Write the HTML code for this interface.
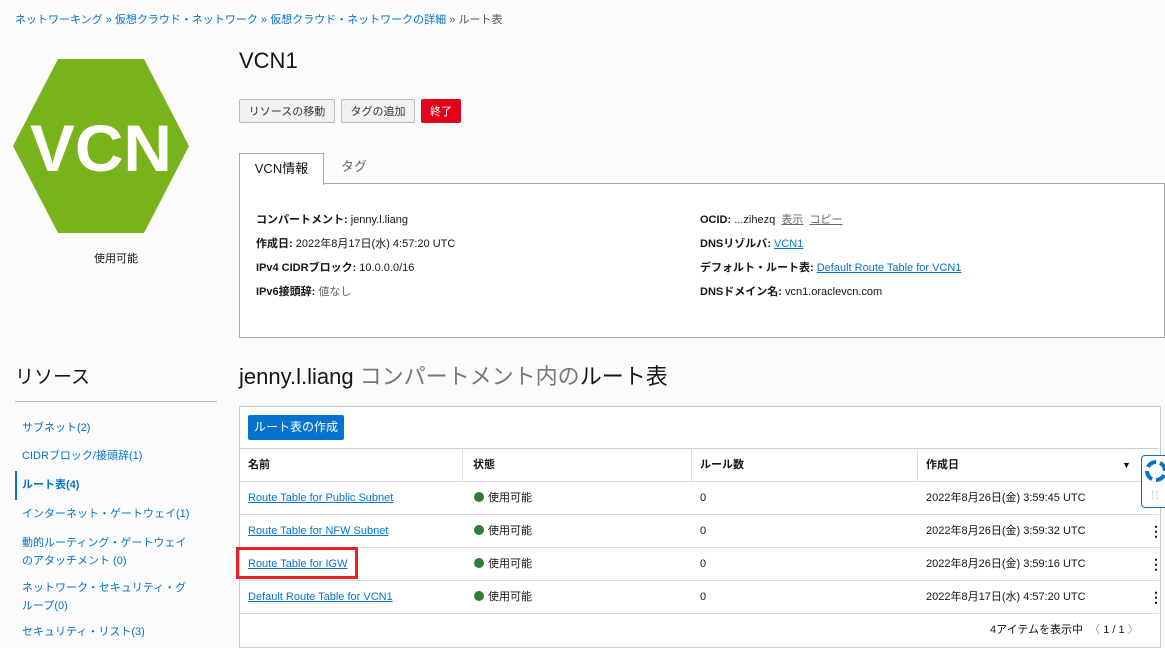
<!DOCTYPE html>
<html><head><meta charset="utf-8"><style>
body{margin:0;width:1165px;height:637px;overflow:hidden;background:#fbfbfb;font-family:"Liberation Sans","Noto Sans CJK JP",sans-serif;color:#161513;position:relative;font-size:12px}
.a{position:absolute;white-space:nowrap;line-height:14px}
a{color:#0572ce}
.bc{left:15px;top:13px;font-size:11px;color:#0572ce}
.bc span{color:#555}
.btn{position:absolute;top:99px;height:24px;border:1px solid #bbb;background:#f1f1f1;font-size:11px;line-height:24px;text-align:center;color:#333;box-sizing:border-box;border-radius:2px}
.lab{font-weight:bold}
.res a{text-decoration:none;color:#0572ce;font-size:11px}
.col{position:absolute;top:448px;height:33px;border-right:1px solid #ddd;box-sizing:border-box}
.row{position:absolute;left:240px;width:919px;height:33px;border-top:1px solid #ddd}
.dot{display:inline-block;width:10px;height:10px;border-radius:50%;background:#2e7d32;vertical-align:-1px;margin-right:4px}
.km{position:absolute;left:1149px;font-weight:bold;font-size:14px}
</style></head><body>
<div class="a bc">ネットワーキング » 仮想クラウド・ネットワーク » 仮想クラウド・ネットワークの詳細 <span>» ルート表</span></div>
<svg class="a" style="left:13px;top:59px" width="177" height="174"><polygon points="45,0 131,0 176,87 131,174 45,174 0,87" fill="#78b31c"/><text x="88" y="112" text-anchor="middle" font-family="Liberation Sans" font-weight="bold" font-size="66" fill="#fff" textLength="142" lengthAdjust="spacingAndGlyphs">VCN</text></svg>
<div class="a" style="left:94px;top:252px;font-size:11px">使用可能</div>
<div class="a" style="left:239px;top:49px;font-size:22px;line-height:24px">VCN1</div>
<div class="btn" style="left:239px;width:96px">リソースの移動</div>
<div class="btn" style="left:341px;width:74px">タグの追加</div>
<div class="btn" style="left:421px;width:40px;background:#e2001a;border-color:#e2001a;color:#fff">終了</div>
<div class="a" style="left:239px;top:183px;width:926px;height:155px;border:1px solid #aaa;box-sizing:border-box;background:#fff"></div>
<div class="a" style="left:239px;top:153px;width:85px;height:32px;border:1px solid #aaa;border-bottom:none;background:#fff;box-sizing:border-box;text-align:center;line-height:30px;font-size:13px">VCN情報</div>
<div class="a" style="left:341px;top:160px;font-size:13px;color:#666">タグ</div>
<div class="a" style="left:256px;top:213px;font-size:11px"><span class="lab">コンパートメント:</span> jenny.l.liang</div>
<div class="a" style="left:256px;top:237px;font-size:11px"><span class="lab">作成日:</span> 2022年8月17日(水) 4:57:20 UTC</div>
<div class="a" style="left:256px;top:261px;font-size:11px"><span class="lab">IPv4 CIDRブロック:</span> 10.0.0.0/16</div>
<div class="a" style="left:256px;top:285px;font-size:11px"><span class="lab">IPv6接頭辞:</span> <span style="color:#666">値なし</span></div>
<div class="a" style="left:700px;top:213px;font-size:11px"><span class="lab">OCID:</span> ...zihezq &nbsp;<u style="color:#666">表示</u> &nbsp;<u style="color:#666">コピー</u></div>
<div class="a" style="left:700px;top:237px;font-size:11px"><span class="lab">DNSリゾルバ:</span> <a href="#">VCN1</a></div>
<div class="a" style="left:700px;top:261px;font-size:11px"><span class="lab">デフォルト・ルート表:</span> <a href="#">Default Route Table for VCN1</a></div>
<div class="a" style="left:700px;top:285px;font-size:11px"><span class="lab">DNSドメイン名:</span> vcn1.oraclevcn.com</div>
<div class="a" style="left:15px;top:367px;font-size:19px;line-height:22px">リソース</div>
<div class="a" style="left:15px;top:401px;width:202px;border-top:1px solid #bbb"></div>
<div class="res">
<div class="a" style="left:22px;top:420px"><a href="#">サブネット(2)</a></div>
<div class="a" style="left:22px;top:448px"><a href="#">CIDRブロック/接頭辞(1)</a></div>
<div class="a" style="left:15px;top:471px;height:29px;border-left:2px solid #0572ce"></div>
<div class="a" style="left:22px;top:477px"><a href="#" style="font-weight:bold">ルート表(4)</a></div>
<div class="a" style="left:22px;top:506px"><a href="#">インターネット・ゲートウェイ(1)</a></div>
<div class="a" style="left:22px;top:534px;line-height:17px"><a href="#">動的ルーティング・ゲートウェイ<br>のアタッチメント (0)</a></div>
<div class="a" style="left:22px;top:579px;line-height:17px"><a href="#">ネットワーク・セキュリティ・グ<br>ループ(0)</a></div>
<div class="a" style="left:22px;top:624px"><a href="#">セキュリティ・リスト(3)</a></div>
</div>
<div class="a" style="left:239px;top:364px;font-size:22px;line-height:26px">jenny.l.liang <span style="color:#777">コンパートメント内の</span>ルート表</div>
<div class="a" style="left:239px;top:406px;width:920px;height:240px;border:1px solid #ccc;background:#fff"></div>
<div class="a" style="left:248px;top:415px;width:96px;height:25px;background:#0572ce;color:#fff;border-radius:2px;text-align:center;line-height:25px;font-size:12px">ルート表の作成</div>
<div class="a" style="left:240px;top:448px;width:919px;border-top:1px solid #ccc"></div>
<div class="col" style="left:240px;width:223px"></div><div class="col" style="left:463px;width:229px"></div><div class="col" style="left:692px;width:226px"></div>
<div class="a lab" style="left:248px;top:458px;font-size:11px">名前</div>
<div class="a lab" style="left:473px;top:458px;font-size:11px">状態</div>
<div class="a lab" style="left:700px;top:458px;font-size:11px">ルール数</div>
<div class="a lab" style="left:926px;top:458px;font-size:11px">作成日</div>
<div class="a" style="left:1122px;top:458px;font-size:9px">▼</div>
<div class="row" style="top:481px"></div><div class="row" style="top:514px"></div><div class="row" style="top:547px"></div><div class="row" style="top:580px"></div><div class="row" style="top:613px"></div>
<div class="a" style="left:248px;top:491px;font-size:11px"><a href="#">Route Table for Public Subnet</a></div>
<div class="a" style="left:248px;top:524px;font-size:11px"><a href="#">Route Table for NFW Subnet</a></div>
<div class="a" style="left:248px;top:557px;font-size:11px"><a href="#">Route Table for IGW</a></div>
<div class="a" style="left:248px;top:590px;font-size:11px"><a href="#">Default Route Table for VCN1</a></div>
<div class="a" style="left:236px;top:547px;width:122px;height:32px;border:3px solid #e8202a;box-sizing:border-box"></div>
<div class="a" style="left:474px;top:491px;font-size:11px"><span class="dot"></span>使用可能</div>
<div class="a" style="left:474px;top:524px;font-size:11px"><span class="dot"></span>使用可能</div>
<div class="a" style="left:474px;top:557px;font-size:11px"><span class="dot"></span>使用可能</div>
<div class="a" style="left:474px;top:590px;font-size:11px"><span class="dot"></span>使用可能</div>
<div class="a" style="left:700px;top:491px;font-size:11px">0</div><div class="a" style="left:700px;top:524px;font-size:11px">0</div><div class="a" style="left:700px;top:557px;font-size:11px">0</div><div class="a" style="left:700px;top:590px;font-size:11px">0</div>
<div class="a" style="left:926px;top:491px;font-size:11px">2022年8月26日(金) 3:59:45 UTC</div>
<div class="a" style="left:926px;top:524px;font-size:11px">2022年8月26日(金) 3:59:32 UTC</div>
<div class="a" style="left:926px;top:557px;font-size:11px">2022年8月26日(金) 3:59:16 UTC</div>
<div class="a" style="left:926px;top:590px;font-size:11px">2022年8月17日(水) 4:57:20 UTC</div>
<div class="km" style="top:523px">⋮</div><div class="km" style="top:556px">⋮</div><div class="km" style="top:589px">⋮</div>
<div class="a" style="left:990px;top:623px;font-size:11px">4アイテムを表示中 &nbsp;<span style="color:#999">〈</span> 1 / 1 <span style="color:#999">〉</span></div>
<div class="a" style="left:1141px;top:455px;width:30px;height:51px;border:1px solid #0572ce;border-radius:4px;background:#fff"></div>
<svg class="a" style="left:1145px;top:460px" width="22" height="22"><circle cx="11" cy="11" r="9" fill="none" stroke="#0572ce" stroke-width="4"/><circle cx="11" cy="11" r="9" fill="none" stroke="#fff" stroke-width="4" stroke-dasharray="4 10.1"/></svg>
<div class="a" style="left:1151px;top:488px;color:#bbb;font-size:12px;letter-spacing:1px">⁞⁞</div>
</body></html>
